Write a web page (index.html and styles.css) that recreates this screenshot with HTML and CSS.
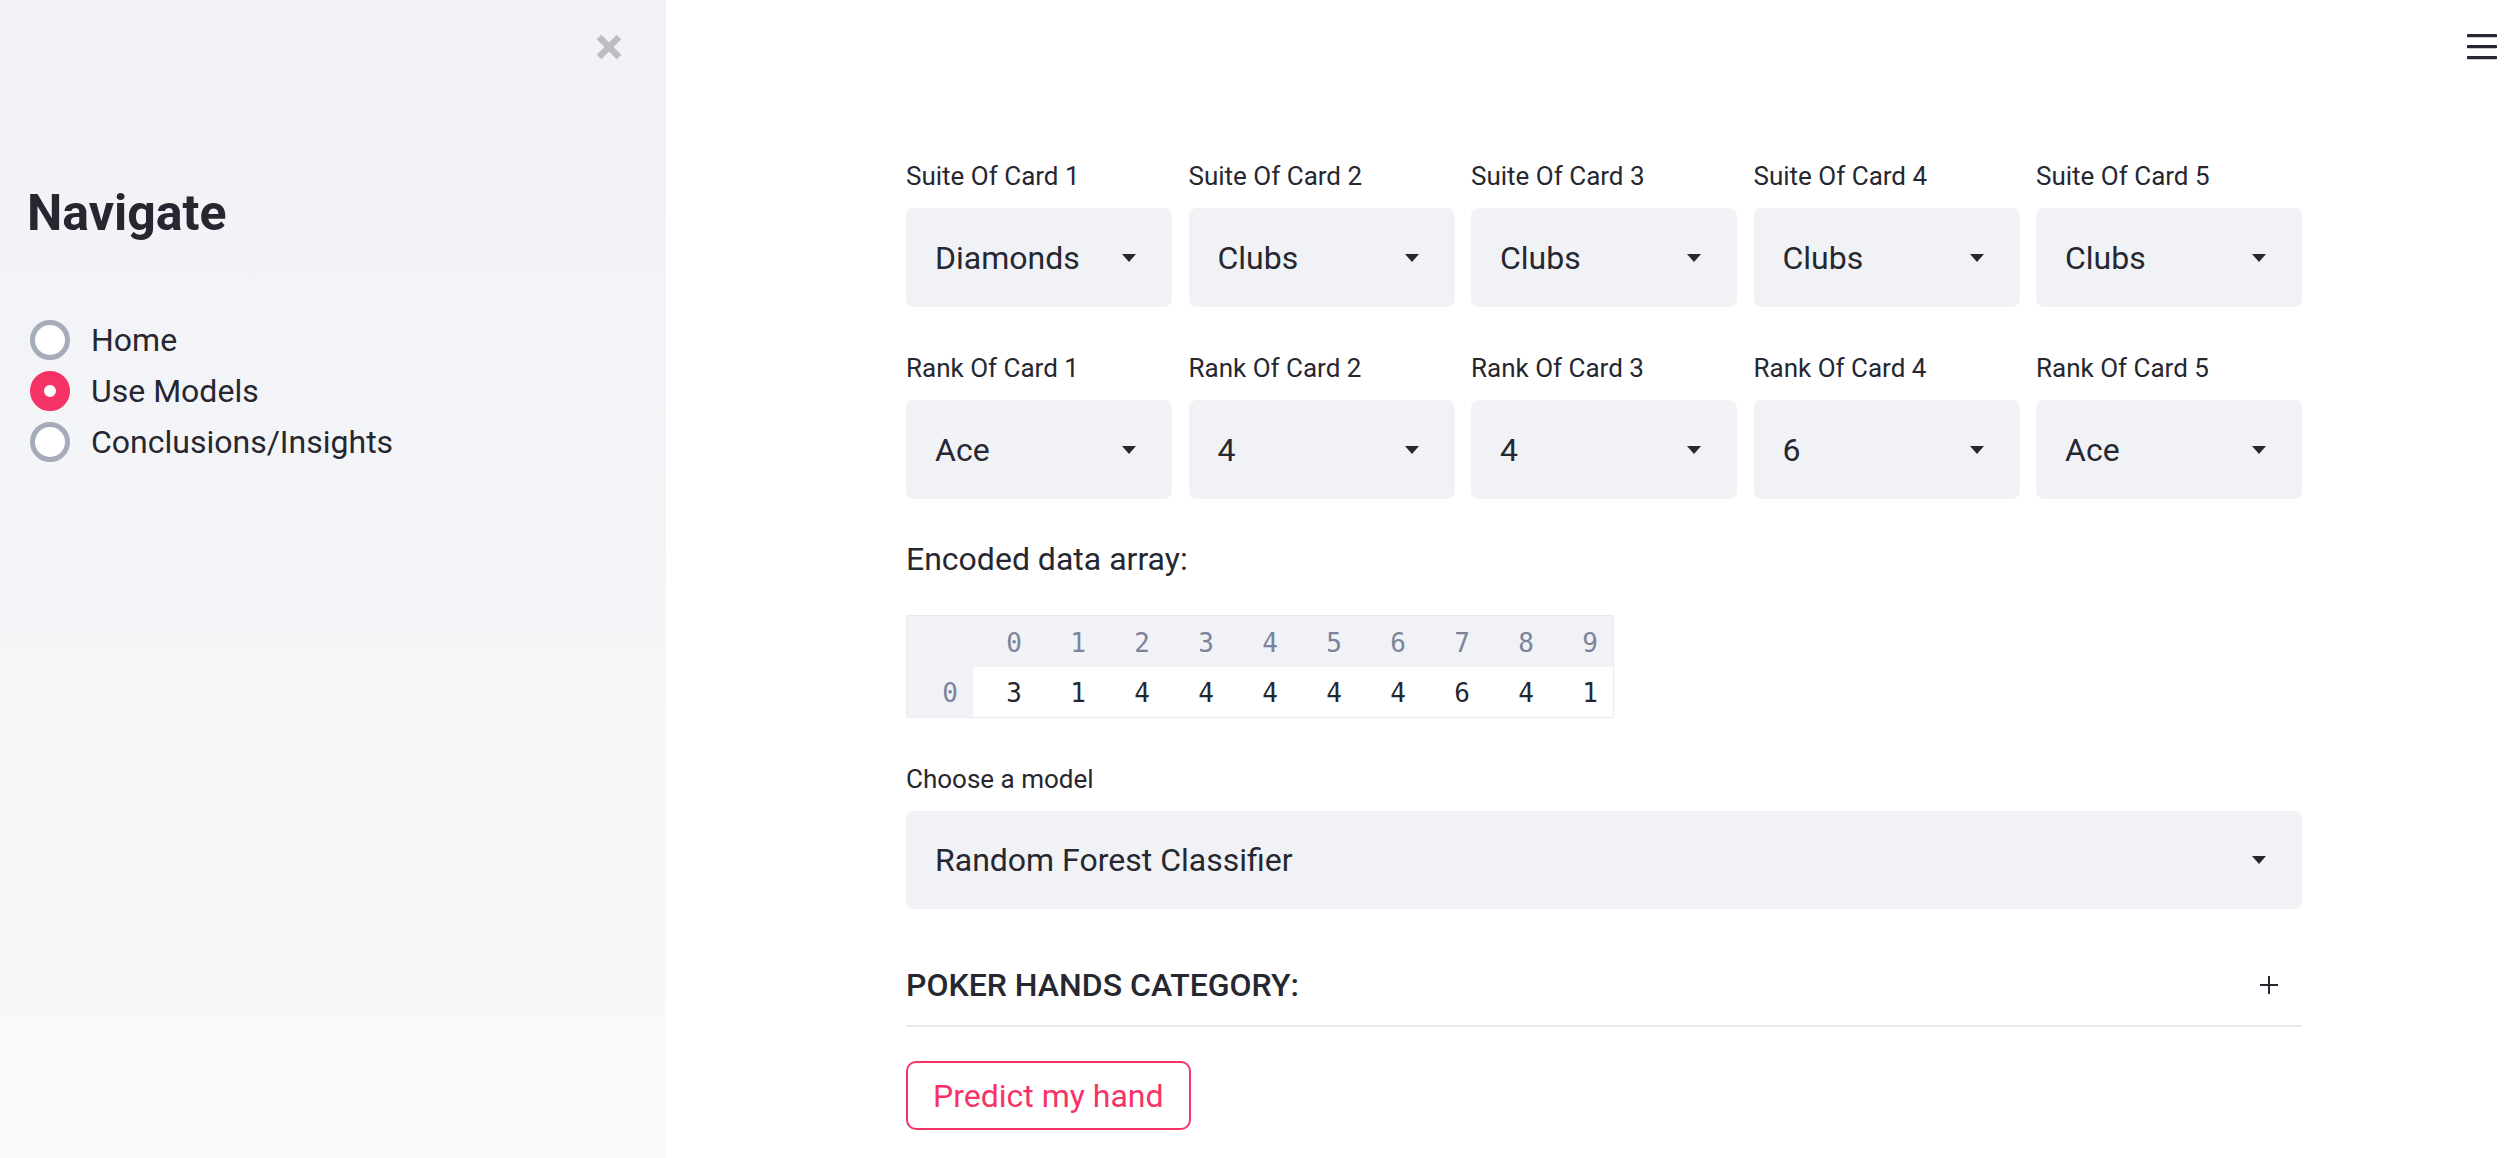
FILE: index.html
```html
<!DOCTYPE html>
<html lang="en">
<head>
<meta charset="utf-8">
<title>Poker Hands</title>
<link rel="stylesheet" href="styles.css">
</head>
<body>
<div class="app">
  <aside class="sidebar">
    <div class="sb-top">
      <svg class="close" viewBox="0 0 28 28" aria-label="Close sidebar">
        <path d="M4 4 L24 24 M24 4 L4 24" stroke="#bcbdc2" stroke-width="6.5" fill="none"/>
      </svg>
    </div>
    <h1 class="sb-title">Navigate</h1>
    <div class="radio-group">
      <div class="radio"><span class="dot"></span><span>Home</span></div>
      <div class="radio"><span class="dot on"></span><span>Use Models</span></div>
      <div class="radio"><span class="dot"></span><span>Conclusions/Insights</span></div>
    </div>
  </aside>

  <main class="main">
    <div class="toolbar">
      <svg class="hamburger" viewBox="0 0 30 26" aria-label="Menu">
        <rect x="0" y="0" width="30" height="3.2" rx="0.8" fill="#262730"/>
        <rect x="0" y="11" width="30" height="3.2" rx="0.8" fill="#262730"/>
        <rect x="0" y="22" width="30" height="3.2" rx="0.8" fill="#262730"/>
      </svg>
    </div>

    <div class="block">
      <div class="cols">
        <div class="field"><div class="label">Suite Of Card 1</div><div class="select"><span>Diamonds</span><span class="caret"></span></div></div>
        <div class="field"><div class="label">Suite Of Card 2</div><div class="select"><span>Clubs</span><span class="caret"></span></div></div>
        <div class="field"><div class="label">Suite Of Card 3</div><div class="select"><span>Clubs</span><span class="caret"></span></div></div>
        <div class="field"><div class="label">Suite Of Card 4</div><div class="select"><span>Clubs</span><span class="caret"></span></div></div>
        <div class="field"><div class="label">Suite Of Card 5</div><div class="select"><span>Clubs</span><span class="caret"></span></div></div>
      </div>

      <div class="cols row2">
        <div class="field"><div class="label">Rank Of Card 1</div><div class="select"><span>Ace</span><span class="caret"></span></div></div>
        <div class="field"><div class="label">Rank Of Card 2</div><div class="select"><span>4</span><span class="caret"></span></div></div>
        <div class="field"><div class="label">Rank Of Card 3</div><div class="select"><span>4</span><span class="caret"></span></div></div>
        <div class="field"><div class="label">Rank Of Card 4</div><div class="select"><span>6</span><span class="caret"></span></div></div>
        <div class="field"><div class="label">Rank Of Card 5</div><div class="select"><span>Ace</span><span class="caret"></span></div></div>
      </div>

      <p class="encoded">Encoded data array:</p>

      <div class="df">
        <div class="hd idx"></div>
        <div class="hd">0</div><div class="hd">1</div><div class="hd">2</div><div class="hd">3</div><div class="hd">4</div>
        <div class="hd">5</div><div class="hd">6</div><div class="hd">7</div><div class="hd">8</div><div class="hd">9</div>
        <div class="bd idx">0</div>
        <div class="bd">3</div><div class="bd">1</div><div class="bd">4</div><div class="bd">4</div><div class="bd">4</div>
        <div class="bd">4</div><div class="bd">4</div><div class="bd">6</div><div class="bd">4</div><div class="bd">1</div>
      </div>

      <div class="label model-label">Choose a model</div>
      <div class="select wide"><span>Random Forest Classifier</span><span class="caret"></span></div>

      <div class="expander">
        <span class="exp-title">POKER HANDS CATEGORY:</span>
        <svg class="plus" viewBox="0 0 20 20" aria-hidden="true"><path d="M10 1 V19 M1 10 H19" stroke="#262730" stroke-width="2" fill="none"/></svg>
      </div>

      <button class="btn" type="button">Predict my hand</button>
    </div>
  </main>
</div>
</body>
</html>
```

FILE: styles.css
```css
html, body {
  margin: 0;
  padding: 0;
}
body {
  font-family: Roboto, "Noto Sans", "Liberation Sans", sans-serif;
  color: #262730;
  background: #ffffff;
}
.app {
  display: flex;
  min-height: 1158px;
}

/* Sidebar */
.sidebar {
  width: 666px;
  flex: none;
  box-sizing: border-box;
  padding: 33px 0 0 27px;
  background: linear-gradient(180deg, #f0f2f6 0%, #f9f9fa 100%);
}
.sb-top {
  display: flex;
  justify-content: flex-end;
  padding-right: 43px;
  height: 28px;
}
.close {
  width: 28px;
  height: 28px;
  display: block;
}
.sb-title {
  margin: 122px 0 0;
  font-size: 50px;
  line-height: 60px;
  font-weight: 700;
  color: #262730;
}
.radio-group {
  margin-top: 71px;
  padding-left: 3px;
  display: flex;
  flex-direction: column;
}
.radio {
  display: flex;
  align-items: center;
  gap: 21px;
  height: 51px;
  font-size: 32px;
}
.dot {
  width: 40px;
  height: 40px;
  box-sizing: border-box;
  border-radius: 50%;
  border: 5px solid #a6abb9;
  background: #ffffff;
  flex: none;
}
.dot.on {
  border: 14px solid #f63366;
}

/* Main */
.main {
  flex: 1;
  min-width: 0;
}
.toolbar {
  display: flex;
  justify-content: flex-end;
  padding: 34px 21px 0 0;
  height: 26px;
}
.hamburger {
  width: 30px;
  height: 26px;
  display: block;
}
.block {
  width: 1396px;
  margin: 100px 0 0 240px;
}
.cols {
  display: grid;
  grid-template-columns: repeat(5, 266px);
  column-gap: 16.5px;
}
.row2 {
  margin-top: 45px;
}
.label {
  font-size: 26px;
  line-height: 32px;
  margin-bottom: 16px;
}
.select {
  height: 99px;
  box-sizing: border-box;
  background: #f0f2f6;
  border-radius: 8px;
  display: flex;
  align-items: center;
  justify-content: space-between;
  padding: 0 36px 0 29px;
  font-size: 32px;
}
.caret {
  width: 0;
  height: 0;
  border-left: 7.5px solid transparent;
  border-right: 7.5px solid transparent;
  border-top: 8px solid #262730;
}
.encoded {
  margin: 40px 0 0;
  font-size: 32px;
  line-height: 40px;
}

/* Dataframe */
.df {
  margin-top: 36px;
  display: grid;
  grid-template-columns: 66px repeat(10, 64px);
  width: max-content;
  border: 1px solid #e6eaf1;
  font-family: "DejaVu Sans Mono", "Liberation Mono", monospace;
  font-size: 26px;
}
.df > div {
  text-align: right;
  padding-right: 15px;
  box-sizing: border-box;
}
.hd {
  height: 51px;
  line-height: 54px;
  background: #f0f2f6;
  color: #7b849a;
}
.bd {
  height: 50px;
  line-height: 52px;
  background: #ffffff;
  color: #262730;
}
.bd.idx {
  background: #f0f2f6;
  color: #7b849a;
}

.model-label {
  margin-top: 45px;
  margin-bottom: 16px;
}
.select.wide {
  height: 98px;
}

/* Expander */
.expander {
  margin-top: 56px;
  height: 60px;
  display: flex;
  justify-content: space-between;
  align-items: flex-start;
  border-bottom: 2px solid #e6eaf1;
  padding-right: 23px;
}
.exp-title {
  font-size: 32px;
  line-height: 40px;
  font-weight: 500;
}
.plus {
  width: 20px;
  height: 20px;
  margin-top: 10px;
  display: block;
}

/* Button */
.btn {
  margin-top: 34px;
  height: 69px;
  box-sizing: border-box;
  border: 2px solid #f63366;
  border-radius: 10px;
  background: #ffffff;
  color: #f63366;
  font-family: inherit;
  font-size: 32px;
  padding: 0 25px;
  cursor: pointer;
}
```
